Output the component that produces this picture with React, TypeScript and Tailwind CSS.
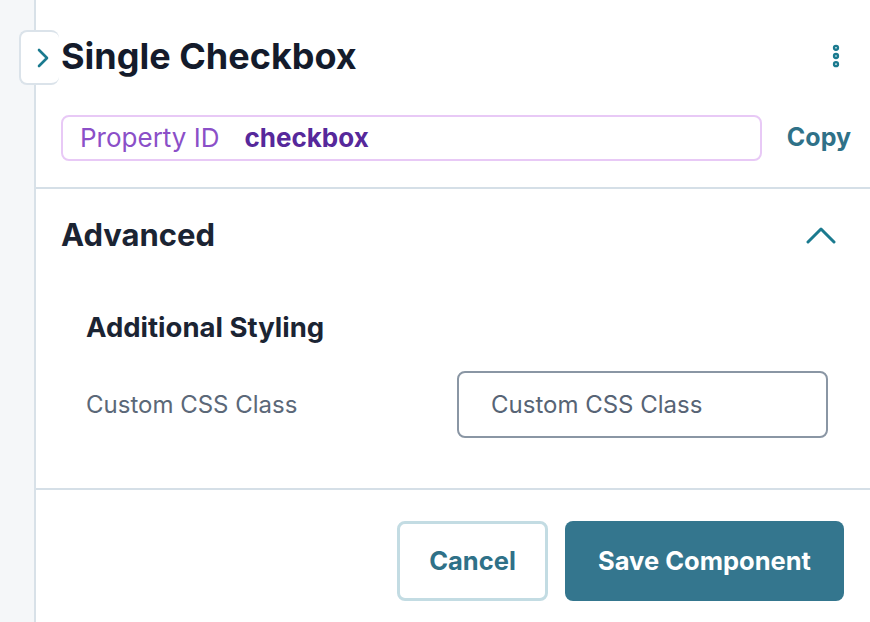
import { EllipsisVertical } from "lucide-react";

const font = { fontFamily: "Inter, 'Noto Sans', sans-serif" };

const App = () => {
  return (
    <div className="flex h-[622px] w-[870px] overflow-hidden bg-white" style={font}>
      <div className="w-[36px] shrink-0 border-r-2 border-[#d8e1e8] bg-[#f5f7f9]" />
      <div className="relative flex flex-1 flex-col">
        {/* collapse tab */}
        <button className="absolute left-[-17px] top-[30px] flex h-[55px] w-[40px] items-center justify-start rounded-lg border-2 border-r-0 border-[#dbe3ea] bg-white pl-[16px] text-[#1a7a8f]">
          <svg width="12" height="20" viewBox="0 0 12 20" fill="none">
            <polyline points="2,2 10,10 2,18" stroke="currentColor" strokeWidth="2.6" strokeLinecap="round" strokeLinejoin="round" />
          </svg>
        </button>

        <div className="flex items-center justify-between pl-[25px] pr-[20px] pt-[34px]">
          <h1 className="text-[36px] font-bold leading-[44px] text-[#141b2b]">Single Checkbox</h1>
          <EllipsisVertical size={28} strokeWidth={3.4} className="text-[#1a7a8f]" />
        </div>

        <div className="mt-[37px] flex items-center pl-[25px] pr-[19px]">
          <div className="flex h-[46px] flex-1 items-center gap-[25px] rounded-lg border-2 border-[#e8c9f6] px-[17px] text-[26px] leading-none">
            <span className="text-[#8b4fc8]">Property ID</span>
            <span className="font-bold text-[#56289b]">checkbox</span>
          </div>
          <button className="ml-[25px] text-[25px] font-bold text-[#2f7188]">Copy</button>
        </div>

        <div className="mt-[26px] border-t-2 border-[#d5dfe7]" />

        <div className="flex items-center justify-between pl-[25px] pr-[34px] pt-[26px]">
          <h2 className="text-[31px] font-bold leading-[40px] text-[#1b2433]">Advanced</h2>
          <svg width="30" height="18" viewBox="0 0 30 18" fill="none" className="text-[#1a7a8f]">
            <polyline points="2,16 15,3 28,16" stroke="currentColor" strokeWidth="3" strokeLinecap="round" strokeLinejoin="round" />
          </svg>
        </div>

        <div className="pl-[50px] pr-[42px] pt-[56px]">
          <h3 className="text-[27.5px] font-bold leading-[32px] text-[#1b2433]">Additional Styling</h3>
          <div className="mt-[28px] flex items-center justify-between">
            <label className="text-[24px] text-[#5b6878]">Custom CSS Class</label>
            <input
              placeholder="Custom CSS Class"
              className="h-[67px] w-[371px] rounded-lg border-2 border-[#8a96a4] px-[32px] text-[24px] text-[#4b5a6a] placeholder:text-[#576475] outline-none"
            />
          </div>
        </div>

        <div className="mt-[50px] border-t-2 border-[#d5dfe7]" />

        <div className="flex justify-end gap-[17px] pr-[26px] pt-[31px]">
          <button className="h-[80px] w-[151px] rounded-lg border-[3px] border-[#c3dce3] text-[25.5px] font-bold text-[#2f7188]">
            Cancel
          </button>
          <button className="h-[80px] w-[279px] rounded-lg bg-[#34768e] text-[25.5px] font-bold text-white">
            Save Component
          </button>
        </div>
      </div>
    </div>
  );
};

export default App;
